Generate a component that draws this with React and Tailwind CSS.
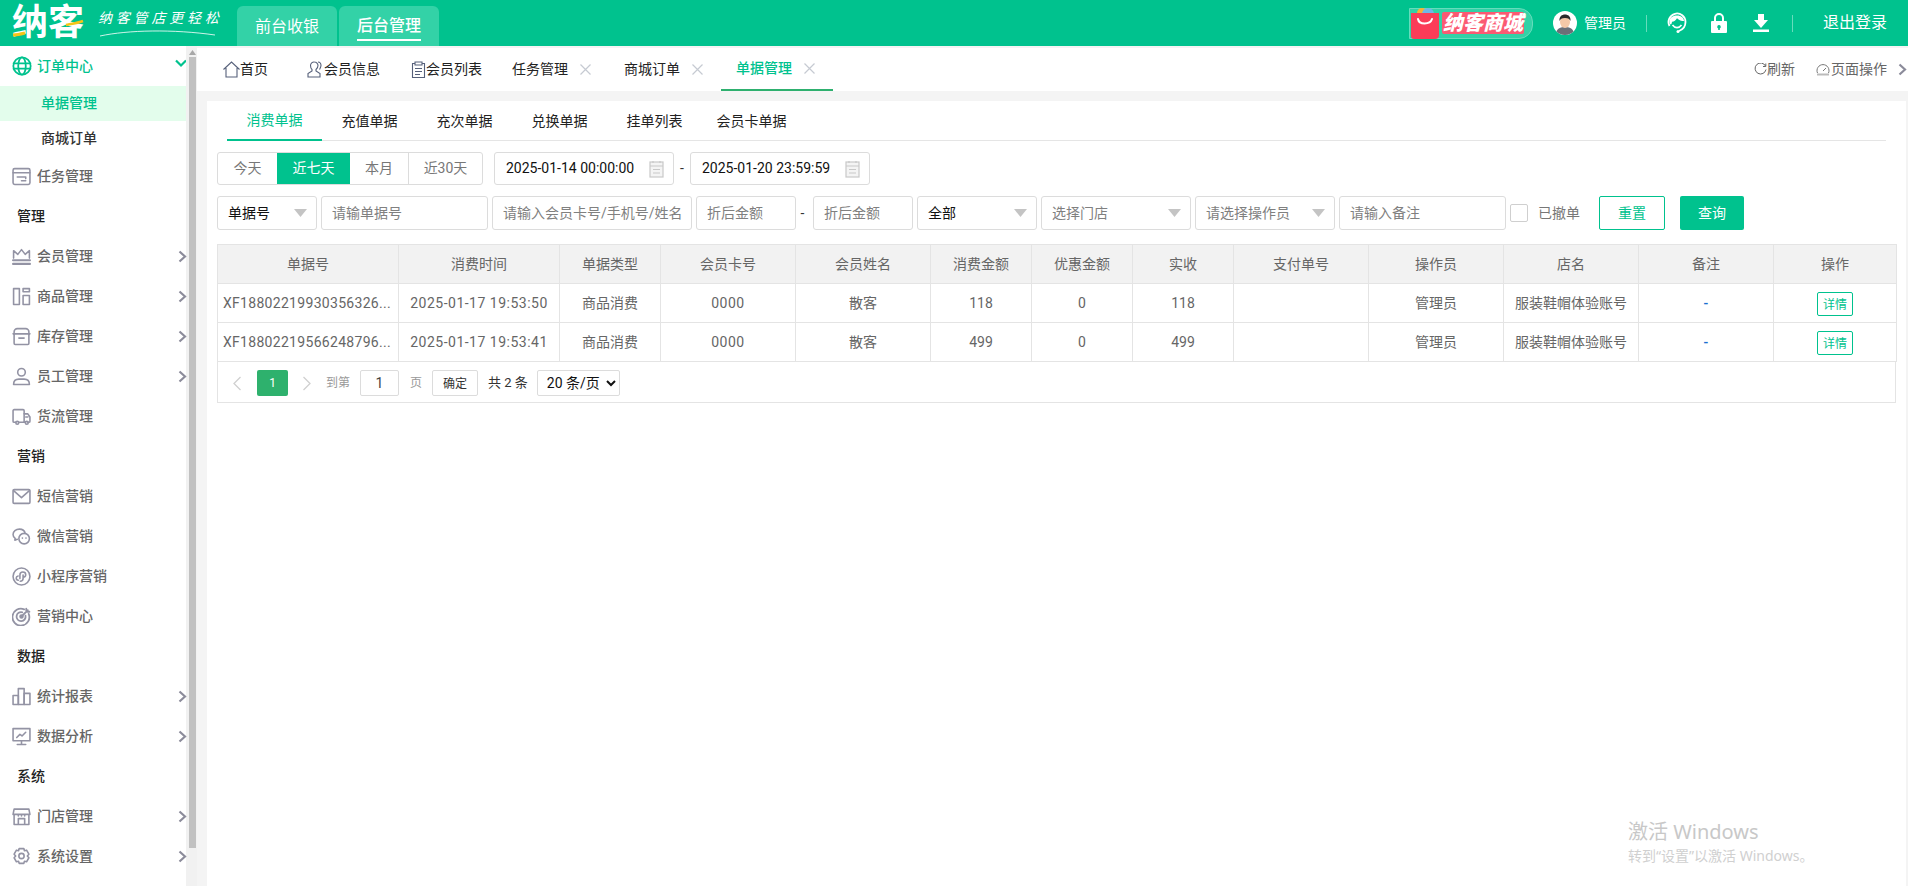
// 纳客 后台 — 单据管理页
const Ico = ({ size = 19, className = "", children, sw = 1.5, stroke = "#9393a4" }) => (
  <svg width={size} height={size} viewBox="0 0 18 18" fill="none" stroke={stroke} strokeWidth={sw} strokeLinecap="round" strokeLinejoin="round" className={`shrink-0 ${className}`}>
    {children}
  </svg>
);

const icons = {
  globe: (
    <Ico size={20} stroke="#00c28e" sw={1.6}>
      <circle cx="9" cy="9" r="7.8" />
      <ellipse cx="9" cy="9" rx="3.4" ry="7.8" />
      <path d="M1.4 6.6h15.2M1.4 11.4h15.2" />
    </Ico>
  ),
  task: (
    <Ico>
      <rect x="1" y="1.5" width="16" height="15" rx="1.5" />
      <path d="M1 5.5h16M5 9.5h8v1.5M9 13h4" />
    </Ico>
  ),
  crown: (
    <Ico>
      <path d="M1.5 10.5V3.5L5.5 7 9 2.5 12.5 7l4-3.500v7" />
      <path d="M1 12.500h16M1 16h16" strokeWidth="2" />
    </Ico>
  ),
  goods: (
    <Ico>
      <rect x="1.5" y="1.5" width="5.5" height="15" />
      <rect x="10.5" y="1.5" width="6" height="3" />
      <rect x="10.5" y="8" width="6" height="8.5" />
    </Ico>
  ),
  stock: (
    <Ico>
      <path d="M2 7V4.5C2 3 3.5 1.5 5 1.5h8c1.5 0 3 1.5 3 3V7" />
      <path d="M1 6.5h16M2 6.5v9a1 1 0 0 0 1 1h12a1 1 0 0 0 1-1v-9M6.5 10.5h5" />
    </Ico>
  ),
  staff: (
    <Ico>
      <circle cx="9" cy="5" r="3.6" />
      <path d="M1.5 16.5c0-3.5 2.5-5 5-5h5c2.5 0 5 1.500 5 5z" />
    </Ico>
  ),
  truck: (
    <Ico>
      <path d="M3.5 14.5H2a1 1 0 0 1-1-1v-10a1 1 0 0 1 1-1h8.500a1 1 0 0 1 1 1v11H6.500" />
      <path d="M11.500 6.500h3.500l2 3v4a1 1 0 0 1-1 1h-1M12.500 14.500h-1M13 9.500h2" />
      <circle cx="5" cy="15" r="1.400" />
      <circle cx="14" cy="15" r="1.400" />
    </Ico>
  ),
  mail: (
    <Ico>
      <rect x="1" y="2.500" width="16" height="13" rx="1" />
      <path d="M1.500 3.500 9 10l7.500-6.500" />
    </Ico>
  ),
  wechat: (
    <Ico>
      <path d="M12.500 6C12 3.500 9.800 2 7 2 3.700 2 1 4.200 1 7c0 1.500.8 2.800 2 3.700L2.700 12.500 5 11.600" />
      <circle cx="11.500" cy="11" r="5" />
      <path d="M9.800 10.500h.1M13.200 10.500h.1" />
    </Ico>
  ),
  mini: (
    <Ico>
      <circle cx="9" cy="9" r="8" />
      <path d="M6 12.500c-1.300 0-2-1-2-2s.8-1.800 1.800-2M7.500 11V7.500C7.500 5.800 8.800 4.800 10.300 4.800S13 6 13 7.300 12 9.500 10.800 9.500M10.500 7.500V11c0 1.500-1.200 2.500-2.700 2.500" />
    </Ico>
  ),
  target: (
    <Ico sw={1.7}>
      <path d="M15.800 6.500A8 8 0 1 1 11.500 2.200" />
      <path d="M12.800 8.200a4.300 4.300 0 1 1-3-3.200" />
      <circle cx="9" cy="9" r="1.300" />
      <path d="M9 9l6-6M13.500 1.500v3h3" />
    </Ico>
  ),
  stats: (
    <Ico>
      <rect x="1" y="8" width="5" height="8.500" />
      <rect x="6" y="1.500" width="5.500" height="15" />
      <rect x="11.500" y="6" width="5.500" height="10.500" />
    </Ico>
  ),
  analysis: (
    <Ico>
      <rect x="1" y="1.500" width="16" height="11.500" />
      <path d="M9 13v3.500M5 16.500h8M4.500 10l3-3 2 1.500 3.500-3.500" />
    </Ico>
  ),
  store: (
    <Ico>
      <path d="M2 2h14l1 5H1zM2 7v9.500h14V7M6 7v1.500M9 7v1.500M12 7v1.500M6 16.500V11h6v5.500" />
    </Ico>
  ),
  gear: (
    <Ico>
      <path d="M6.800 1.500h4.400l.6 2 2-.5 2.200 3.800-1.500 1.700 1.500 1.700-2.200 3.800-2-.5-.6 2H6.800l-.6-2-2 .5L2 10.200l1.500-1.700L2 6.800 4.200 3l2 .5z" />
      <circle cx="9" cy="8.500" r="2.500" />
    </Ico>
  ),
};

const menu = [
  { icon: "task", label: "任务管理" },
  { title: "管理" },
  { icon: "crown", label: "会员管理", more: true },
  { icon: "goods", label: "商品管理", more: true },
  { icon: "stock", label: "库存管理", more: true },
  { icon: "staff", label: "员工管理", more: true },
  { icon: "truck", label: "货流管理" },
  { title: "营销" },
  { icon: "mail", label: "短信营销" },
  { icon: "wechat", label: "微信营销" },
  { icon: "mini", label: "小程序营销" },
  { icon: "target", label: "营销中心" },
  { title: "数据" },
  { icon: "stats", label: "统计报表", more: true },
  { icon: "analysis", label: "数据分析", more: true },
  { title: "系统" },
  { icon: "store", label: "门店管理", more: true },
  { icon: "gear", label: "系统设置", more: true },
];

const columns = [
  ["单据号", "w-[181px]"],
  ["消费时间", "w-[161px]"],
  ["单据类型", "w-[101px]"],
  ["会员卡号", "w-[135px]"],
  ["会员姓名", "w-[135px]"],
  ["消费金额", "w-[101px]"],
  ["优惠金额", "w-[101px]"],
  ["实收", "w-[101px]"],
  ["支付单号", "w-[135px]"],
  ["操作员", "w-[135px]"],
  ["店名", "w-[135px]"],
  ["备注", "w-[135px]"],
  ["操作", "w-[123px]"],
];

const rows = [
  ["XF18802219930356326...", "2025-01-17 19:53:50", "118"],
  ["XF18802219566248796...", "2025-01-17 19:53:41", "499"],
];

function Chevron({ className = "" }) {
  return (
    <svg width="9" height="13" viewBox="0 0 9 13" fill="none" stroke="#8b8b9a" strokeWidth="2.200" className={className}>
      <path d="M1.500 1.500 7 6.500 1.500 11.500" />
    </svg>
  );
}

function Caret() {
  return (
    <svg width="13" height="8" viewBox="0 0 13 8" className="shrink-0">
      <polygon points="0,0 13,0 6.500,8" fill="#c4c4c4" />
    </svg>
  );
}

function Select({ label, width, dark }) {
  return (
    <div className={`flex h-full ${width} items-center justify-between rounded-[3px] border border-[#dcdcdc] pl-[10px] pr-[9px] ${dark ? "text-[#111]" : "text-[#808080]"}`}>
      <span>{label}</span>
      <Caret />
    </div>
  );
}

function Field({ placeholder, width }) {
  return (
    <input
      placeholder={placeholder}
      className={`h-full ${width} rounded-[3px] border border-[#dcdcdc] pl-[10px] outline-none placeholder:text-[#808080]`}
    />
  );
}

function DateField({ value }) {
  return (
    <div className="flex h-full w-[180px] items-center justify-between rounded-[3px] border border-[#dcdcdc] pl-[11px] pr-[9px] text-[#111]">
      <span>{value}</span>
      <svg width="15" height="18" viewBox="0 0 15 18" fill="none" stroke="#c8c8c8" strokeWidth="1.200">
        <rect x="1" y="2" width="13" height="15" fill="#f4f4f4" />
        <path d="M1 6h13M4 1v2M11 1v2M4 9.500h7M4 13h7" />
      </svg>
    </div>
  );
}

function Sidebar() {
  return (
    <aside className="flex w-[197px] shrink-0">
      <nav className="w-[186px] bg-white">
        <div className="flex h-[40px] items-center pl-[12px] font-medium text-[#00c28e]">
          {icons.globe}
          <span className="ml-[5px]">订单中心</span>
          <svg width="14" height="9" viewBox="0 0 14 9" fill="none" stroke="#00c28e" strokeWidth="2.200" className="mb-[6px] ml-auto mr-[-2px]">
            <path d="M2 1.500 7 6.500 12 1.500" />
          </svg>
        </div>
        <div className="flex h-[35px] items-center bg-[#e3fdec] pl-[41px] font-medium text-[#00c28e]">单据管理</div>
        <div className="flex h-[35px] items-center pl-[41px] font-medium text-[#333]">商城订单</div>
        {menu.map((m) =>
          m.title ? (
            <div key={m.title} className="flex h-[40px] items-center pl-[17px] font-medium text-[#222]">{m.title}</div>
          ) : (
            <div key={m.label} className="relative flex h-[40px] items-center pl-[12px] font-medium text-[#666]">
              <span className="flex w-[25px]">{icons[m.icon]}</span>
              <span>{m.label}</span>
              {m.more && <Chevron className="absolute left-[178px] top-[14px]" />}
            </div>
          )
        )}
      </nav>
      <div className="flex w-[11px] flex-col items-center bg-[#f1f1f1] pl-[1px] pt-[4px]">
        <svg width="7" height="5" viewBox="0 0 7 5" className="shrink-0">
          <polygon points="3.500,0 7,5 0,5" fill="#a8a8a8" />
        </svg>
        <div className="mt-[2px] h-[791px] w-[7px] bg-[#c1c1c1]" />
      </div>
    </aside>
  );
}

function Logo() {
  return (
    <div className="flex w-[237px] shrink-0 items-center">
      <div className="relative ml-[12px] h-[46px] w-[74px]">
        <span className="absolute left-0 top-[1px] text-[36px] font-bold leading-[44px] text-white">纳客</span>
        <svg width="74" height="30" viewBox="0 0 74 30" className="absolute left-0 top-[9px]" fill="none">
          <path d="M1 26c4 0 8-1 12-2" stroke="#f5c518" strokeWidth="3" />
          <path d="M54 16c5-1 12-2 17-4" stroke="#f5c518" strokeWidth="2.500" />
        </svg>
      </div>
      <div className="relative ml-[12px] h-[46px] w-[124px]">
        <span className="absolute left-0 top-[8px] whitespace-nowrap text-[14px] italic leading-[20px] tracking-[3.800px] text-white">纳客管店更轻松</span>
        <svg width="120" height="8" viewBox="0 0 120 8" fill="none" className="absolute left-0 top-[29px]">
          <path d="M2 7C30 1 75 0 117 6" stroke="#fff" strokeWidth="1" opacity="0.8" />
        </svg>
      </div>
    </div>
  );
}

function Header() {
  return (
    <header className="flex h-[46px] items-stretch bg-[#00c28e] text-white">
      <Logo />
      <div className="mt-[6px] flex gap-[2px] text-[16px]">
        <div className="flex w-[100px] items-center justify-center rounded-t-[6px] bg-[#33d2a7] pt-[2px]">前台收银</div>
        <div className="flex w-[100px] items-center justify-center rounded-t-[6px] bg-[#33d2a7] pt-[2px] font-medium">
          <span className="border-b-[2px] border-white pb-[1px] leading-[24px]">后台管理</span>
        </div>
      </div>
      <div className="ml-auto flex items-center pr-[21px]">
        <div className="relative flex h-[31px] w-[124px] items-center rounded-r-[14px] border border-[#66dcbc] bg-[#33d2a7]">
          <svg width="30" height="33" viewBox="0 0 30 33" className="absolute -top-[2px] left-0">
            <circle cx="12" cy="6" r="5" fill="#f9b233" />
            <circle cx="18" cy="7" r="6" fill="#6fb7e8" />
            <path d="M1 6h28v22a4 4 0 0 1-4 4H4a3 3 0 0 1-3-3z" fill="#fb3c58" />
            <path d="M8 12c1 6 12 6 14 0" fill="none" stroke="#fff" strokeWidth="2" strokeLinecap="round" />
          </svg>
          <span className="ml-[32px] whitespace-nowrap rounded-[2px] bg-[#fb5a72] px-[1px] text-[20px] font-black italic leading-[22px] text-white">纳客商城</span>
        </div>
        <svg width="24" height="24" viewBox="0 0 24 24" className="ml-[20px]">
          <circle cx="12" cy="12" r="12" fill="#fff" />
          <path d="M3.500 20.500c1.500-3.500 4.500-4.500 8.500-4.500s7 1 8.500 4.500A12 12 0 0 1 12 24a12 12 0 0 1-8.500-3.500z" fill="#6b6f78" />
          <ellipse cx="12" cy="11" rx="5" ry="6" fill="#f5c8a8" />
          <path d="M6.500 10C6 5.500 9 3.500 12 3.500s6 2 5.500 6.500c-1-2-2-3-5.500-3s-4.500 1-5.500 3z" fill="#2b2b2b" />
        </svg>
        <span className="ml-[7px] text-[14px]">管理员</span>
        <span className="ml-[20px] h-[17px] w-px bg-[#66dcbc]" />
        <svg width="20" height="22" viewBox="0 0 20 22" className="ml-[20px]" fill="none">
          <path d="M2.500 14A8.500 8.500 0 1 1 18.500 10c0 4-2.500 7.500-6.500 9" stroke="#fff" strokeWidth="1.800" />
          <path d="M2.500 9.500c0-3.500 3-6 7.500-6s7 2.500 7 5.500c-2.500 0-5-.8-7-2.800-1 2-3 3.300-5 3.500-.2 1.500-.5 2.300-1 2.800-1 0-1.500-1.500-1.500-3z" fill="#fff" />
          <path d="M5.500 13c1.300 1.800 2.800 2.600 4.500 2.600s3.200-.8 4.500-2.600" stroke="#fff" strokeWidth="1.600" />
          <circle cx="11" cy="19.500" r="1.500" fill="#fff" />
        </svg>
        <svg width="16" height="20" viewBox="0 0 16 20" className="ml-[24px]" fill="#fff">
          <path fillRule="evenodd" d="M3 8V5a5 5 0 0 1 10 0v3h2a1 1 0 0 1 1 1v10a1 1 0 0 1-1 1H1a1 1 0 0 1-1-1V9a1 1 0 0 1 1-1zm2 0h6V5a3 3 0 0 0-6 0zm3 4a1.800 1.800 0 0 0-.8 3.400V17h1.600v-1.600A1.800 1.800 0 0 0 8 12z" />
        </svg>
        <svg width="16" height="18" viewBox="0 0 16 18" className="ml-[26px]" fill="#fff">
          <path d="M5 0h6v6h4l-7 8-7-8h4zM0 15.500h16V18H0z" />
        </svg>
        <span className="ml-[23px] h-[17px] w-px bg-[#66dcbc]" />
        <span className="ml-[30px] text-[16px]">退出登录</span>
      </div>
    </header>
  );
}

function CloseX() {
  return (
    <svg width="11" height="11" viewBox="0 0 11 11" stroke="#c6cad2" strokeWidth="1.200" className="ml-[12px]">
      <path d="M.5.500l10 10M10.500.500l-10 10" />
    </svg>
  );
}

function TabBar() {
  return (
    <div className="mt-[2px] flex h-[43px] shrink-0 items-stretch bg-white pl-[26px] text-[#222]">
      <div className="flex w-[84px] items-center">
        <svg width="17" height="17" viewBox="0 0 17 17" fill="none" stroke="#56607a" strokeWidth="1.100">
          <path d="M.500 8.500 8.500 1l8 7.500M3 7v9h11V7" />
        </svg>
        <span>首页</span>
      </div>
      <div className="flex w-[104px] items-center">
        <svg width="17" height="17" viewBox="0 0 17 17" fill="none" stroke="#56607a" strokeWidth="1.100">
          <path d="M7.500 1a3.500 3.500 0 0 1 3.500 3.500c0 2-1 3-2 4v1.500l4 2.500v3.500H1v-3.500L5 10V8.500c-1-1-1.500-2-1.500-4A3.500 3.500 0 0 1 7.500 1zM11 1c2 0 3 2 3 3.500s-1 3-1.500 4" />
        </svg>
        <span>会员信息</span>
      </div>
      <div className="flex w-[101px] items-center">
        <svg width="15" height="17" viewBox="0 0 15 17" fill="none" stroke="#56607a" strokeWidth="1.100">
          <path d="M4 2.500H1.500v14h12v-14H11M4 1h7v3H4zM4 7.500h7M4 10.500h7M4 13.500h5" />
        </svg>
        <span>会员列表</span>
      </div>
      <div className="flex w-[112px] items-center">
        <span>任务管理</span>
        <CloseX />
      </div>
      <div className="flex w-[97px] items-center">
        <span>商城订单</span>
        <CloseX />
      </div>
      <div className="flex w-[112px] items-center border-b-[2px] border-[#2eb06f] pl-[15px] text-[#00c28e]">
        <span className="font-medium">单据管理</span>
        <CloseX />
      </div>
      <div className="ml-auto flex items-center text-[#666]">
        <svg width="13" height="13" viewBox="0 0 13 13" fill="none" stroke="#666" strokeWidth="1">
          <path d="M11.500 3A5.500 5.500 0 1 0 12 6.500M11.800 .500V3.500H9" />
        </svg>
        <span>刷新</span>
        <svg width="14" height="13" viewBox="0 0 14 13" fill="none" stroke="#777" strokeWidth="1" className="ml-[21px]">
          <path d="M1.500 10A6 6 0 1 1 12.500 10M7 8l3-3" />
          <path d="M1 11.500h12" stroke="#bbb" strokeWidth="2" />
        </svg>
        <span className="ml-px">页面操作</span>
        <Chevron className="ml-[11px] mr-[1px]" />
      </div>
    </div>
  );
}

function BillTabs() {
  const tabs = ["消费单据", "充值单据", "充次单据", "兑换单据", "挂单列表"];
  return (
    <div className="ml-[20px] mr-[20px] flex h-[40px] border-b border-[#e5e5e5] text-[#222]">
      {tabs.map((t, i) => (
        <div
          key={t}
          className={`flex h-[40px] w-[95px] items-center justify-center ${i === 0 ? "border-b-[2px] border-[#00c28e] text-[#00c28e]" : ""}`}
        >
          {t}
        </div>
      ))}
      <div className="flex h-[40px] w-[97px] items-center justify-center pl-[2px]">会员卡单据</div>
    </div>
  );
}

function Filters() {
  return (
    <div className="pl-[10px]">
      <div className="mt-[11px] flex h-[33px] items-stretch">
        <div className="flex w-[266px] rounded-[3px] border border-[#dcdcdc] text-[#777]">
          <span className="flex w-[59px] items-center justify-center">今天</span>
          <span className="flex w-[73px] items-center justify-center bg-[#00c28e] text-white">近七天</span>
          <span className="flex w-[59px] items-center justify-center border-r border-[#dcdcdc]">本月</span>
          <span className="flex flex-1 items-center justify-center">近30天</span>
        </div>
        <div className="ml-[11px]"><DateField value="2025-01-14 00:00:00" /></div>
        <span className="flex w-[16px] items-center justify-center text-[#333]">-</span>
        <DateField value="2025-01-20 23:59:59" />
      </div>
      <div className="mt-[11px] flex h-[34px] items-center">
        <Select label="单据号" width="w-[100px]" dark />
        <div className="ml-[4px] h-full"><Field placeholder="请输单据号" width="w-[167px]" /></div>
        <div className="ml-[4px] h-full"><Field placeholder="请输入会员卡号/手机号/姓名" width="w-[200px]" /></div>
        <div className="ml-[4px] h-full"><Field placeholder="折后金额" width="w-[100px]" /></div>
        <span className="flex w-[17px] items-center justify-center pr-[4px] text-[#333]">-</span>
        <Field placeholder="折后金额" width="w-[100px]" />
        <div className="ml-[4px] h-full"><Select label="全部" width="w-[120px]" dark /></div>
        <div className="ml-[4px] h-full"><Select label="选择门店" width="w-[150px]" /></div>
        <div className="ml-[4px] h-full"><Select label="请选择操作员" width="w-[140px]" /></div>
        <div className="ml-[4px] h-full"><Field placeholder="请输入备注" width="w-[167px]" /></div>
        <span className="ml-[4px] h-[18px] w-[18px] rounded-[2px] border border-[#cfcfcf]" />
        <span className="ml-[10px] text-[#777]">已撤单</span>
        <button type="button" className="ml-[19px] h-full w-[66px] rounded-[2px] border border-[#00c28e] text-[#00c28e]">重置</button>
        <button type="button" className="ml-[15px] h-full w-[64px] rounded-[2px] bg-[#00c28e] text-white">查询</button>
      </div>
    </div>
  );
}

function BillTable() {
  return (
    <div className="ml-[10px] mt-[14px] w-[1679px] text-[#666]">
      <table className="w-full table-fixed border-collapse">
        <colgroup>
          {columns.map(([name, w]) => <col key={name} className={w} />)}
        </colgroup>
        <thead>
          <tr className="h-[39px] bg-[#f2f2f2]">
            {columns.map(([name]) => (
              <th key={name} className="border border-[#e4e4e4] text-center font-normal">{name}</th>
            ))}
          </tr>
        </thead>
        <tbody>
          {rows.map(([no, time, amount]) => (
            <tr key={no} className="h-[39px] text-center">
              <td className="whitespace-nowrap border border-[#e4e4e4] pl-[5px] text-left tracking-[0.3px]">{no}</td>
              <td className="border border-[#e4e4e4] tracking-[0.5px]">{time}</td>
              <td className="border border-[#e4e4e4]">商品消费</td>
              <td className="border border-[#e4e4e4] tracking-[0.5px]">0000</td>
              <td className="border border-[#e4e4e4]">散客</td>
              <td className="border border-[#e4e4e4]">{amount}</td>
              <td className="border border-[#e4e4e4]">0</td>
              <td className="border border-[#e4e4e4]">{amount}</td>
              <td className="border border-[#e4e4e4]" />
              <td className="border border-[#e4e4e4]">管理员</td>
              <td className="border border-[#e4e4e4]">服装鞋帽体验账号</td>
              <td className="border border-[#e4e4e4] font-medium text-[#1a6fd0]">-</td>
              <td className="border border-[#e4e4e4]">
                <button type="button" className="mt-[2px] inline-flex h-[24px] w-[36px] items-center justify-center rounded-[2px] border border-[#00c28e] pt-[2px] text-[12px] text-[#00c28e]">详情</button>
              </td>
            </tr>
          ))}
        </tbody>
      </table>
      <div className="flex h-[41px] items-center border-x border-b border-[#e4e4e4] pl-[14px] pt-[2px] text-[12px]">
        <svg width="10" height="15" viewBox="0 0 10 15" fill="none" stroke="#d0d0d0" strokeWidth="1.300">
          <path d="M8.500 1 2 7.500 8.500 14" />
        </svg>
        <span className="ml-[15px] flex h-[26px] w-[31px] items-center justify-center rounded-[2px] bg-[#2eb16d] text-white">1</span>
        <svg width="10" height="15" viewBox="0 0 10 15" fill="none" stroke="#d0d0d0" strokeWidth="1.300" className="ml-[14px]">
          <path d="M1.500 1 8 7.500 1.500 14" />
        </svg>
        <span className="ml-[14px] text-[#999]">到第</span>
        <span className="ml-[10px] flex h-[26px] w-[39px] items-center justify-center rounded-[2px] border border-[#dcdcdc] text-[14px] text-[#444]">1</span>
        <span className="ml-[11px] text-[#999]">页</span>
        <button type="button" className="ml-[10px] h-[26px] w-[46px] rounded-[2px] border border-[#dcdcdc] pt-[2px] text-[#333]">确定</button>
        <span className="ml-[10px] text-[13px] text-[#333]">共 2 条</span>
        <select className="ml-[9px] h-[26px] w-[83px] rounded-[2px] border border-[#dcdcdc] bg-white pl-[5px] text-[14px] text-[#111] outline-none">
          <option>20 条/页</option>
        </select>
      </div>
    </div>
  );
}

export default function App() {
  return (
    <div className="relative flex h-screen w-full flex-col overflow-hidden bg-white font-[Roboto,'Noto_Sans_CJK_SC',sans-serif] text-[14px]">
      <Header />
      <div className="flex min-h-0 flex-1">
        <Sidebar />
        <main className="flex min-w-0 flex-1 flex-col bg-[#f4f4f4]">
          <TabBar />
          <section className="ml-[10px] mr-[2px] mt-[10px] flex-1 bg-white">
            <BillTabs />
            <Filters />
            <BillTable />
          </section>
        </main>
      </div>
      {/* 系统激活水印 */}
      <div className="pointer-events-none absolute left-[1628px] top-[818px] font-['Noto_Sans','Noto_Sans_CJK_SC',sans-serif] text-[#c8c8c8]">
        <div className="text-[20px] leading-[28px]">激活 Windows</div>
        <div className="text-[14px] leading-[20px] text-[#d0d0d0]">转到“设置”以激活 Windows。</div>
      </div>
    </div>
  );
}
